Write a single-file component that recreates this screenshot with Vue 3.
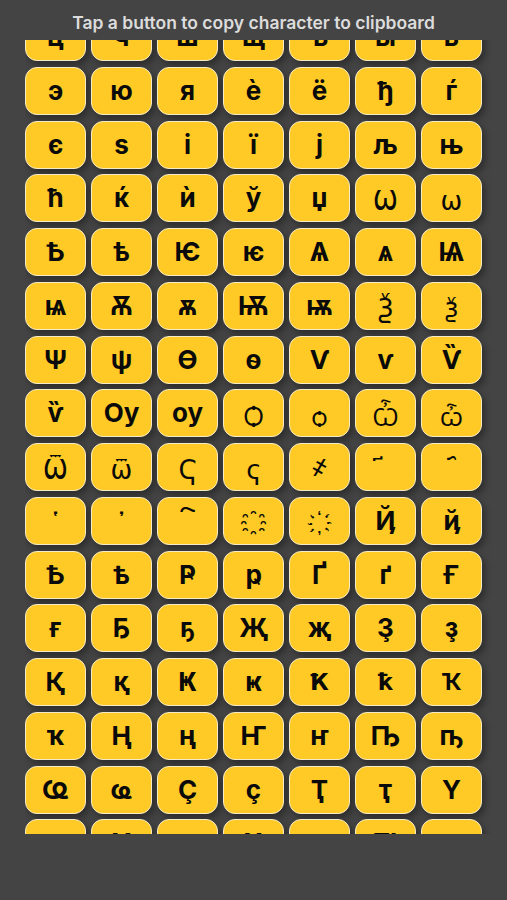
<script setup>
import { ref, onMounted } from 'vue'

const start = 0x0446
const chars = []
for (let i = 0; i < 112; i++) {
  chars.push(String.fromCodePoint(start + i))
}
const groups = {
  thin: 'ѠѡѮѯѾѿҀҁ',
  round: 'ѺѻѼѽ',
  marks: '\u0484\u0485\u0486\u0487\u0488\u0489',
  small: 'ҞҟҠ'
}
function kind(c) {
  return Object.keys(groups).find((k) => groups[k].includes(c)) || ''
}
const scroller = ref(null)
onMounted(() => {
  scroller.value.scrollTop = 27
})
</script>

<template>
  <div class="page">
    <h1 class="title">Tap a button to copy character to clipboard</h1>
    <div ref="scroller" class="scroller">
      <div class="grid">
        <button v-for="c in chars" :key="c" class="key" :class="kind(c)">{{ c }}</button>
      </div>
    </div>
  </div>
</template>

<style scoped>
.page {
  width: 507px;
  height: 900px;
  background: #444444;
  box-sizing: border-box;
  padding-top: 13px;
  overflow: hidden;
}
.title {
  margin: 0;
  height: 27px;
  text-align: center;
  font: 600 17.5px/20px Inter, "Liberation Sans", sans-serif;
  color: #dcdcdc;
}
.scroller {
  height: 794px;
  margin: 0 0 0 25px;
  width: 470px;
  overflow: hidden;
}
.grid {
  display: grid;
  grid-template-columns: repeat(7, 61px);
  grid-auto-rows: 48px;
  column-gap: 5px;
  row-gap: 5.77px;
  padding-bottom: 40px;
}
.key {
  box-sizing: border-box;
  padding: 0;
  border: 1.5px solid #f5ebc8;
  border-radius: 12px;
  background: #ffca26;
  box-shadow: 3px 4px 7px rgba(0, 0, 0, 0.35);
  color: #0a0a0a;
  font: 700 26px/1 Inter, "DejaVu Sans", sans-serif;
  display: flex;
  align-items: center;
  justify-content: center;
}
.thin {
  padding-top: 5px;
  font-family: "DejaVu Sans", sans-serif;
  font-weight: 400;
}
.round {
  padding-top: 5px;
  font-family: "Open Sans", "DejaVu Sans", sans-serif;
  font-weight: 400;
}
.marks {
  font-family: "Liberation Sans", "DejaVu Sans", sans-serif;
}
.small {
  font-size: 23px;
}
</style>
